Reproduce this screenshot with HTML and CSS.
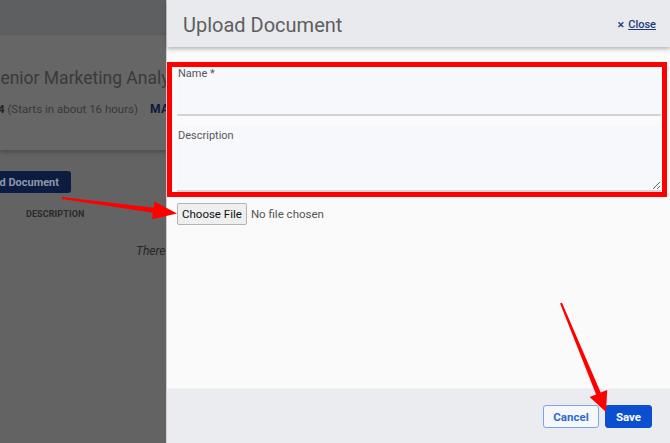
FILE: index.html
```html
<!DOCTYPE html>
<html>
<head>
<meta charset="utf-8">
<link rel="stylesheet" href="styles.css">
</head>
<body>
<div class="page">
  <div class="topbar"></div>
  <section class="card">
    <h2 class="job-title">Senior Marketing Analyst</h2>
    <div class="job-meta">
      <div class="meta-date"><span class="meta-text"><b>Sep 24</b> (Starts in about 16 hours)</span></div>
      <span class="meta-link">MANAGE</span>
    </div>
  </section>
  <div class="toolbar">
    <div class="tool-wrap"><button class="dark-btn">Upload Document</button></div>
  </div>
  <div class="table-head"><span class="th">DESCRIPTION</span></div>
  <div class="empty">There are no documents</div>
</div>

<aside class="drawer">
  <header class="drawer-head">
    <h1 class="drawer-title">Upload Document</h1>
    <a class="close"><span class="close-x">&#x2715;</span><span class="close-t">Close</span></a>
  </header>
  <div class="drawer-body">
    <form class="form">
      <div class="field">
        <label class="label">Name *</label>
        <input class="input" type="text">
      </div>
      <div class="field field-desc">
        <label class="label">Description</label>
        <textarea class="textarea"></textarea>
      </div>
      <div class="file-row">
        <button type="button" class="file-btn">Choose File</button>
        <span class="file-none">No file chosen</span>
      </div>
    </form>
  </div>
  <footer class="drawer-foot">
    <button class="btn btn-outline">Cancel</button>
    <button class="btn btn-primary">Save</button>
  </footer>
</aside>

<div class="annot-box"></div>
<svg class="annot" width="670" height="443" viewBox="0 0 670 443">
  <polygon fill="#ff0000" points="62.1,197 153.5,207.8 154.4,201.4 177,213.5 152,219.2 152.9,212.8 61.9,199"/>
  <polygon fill="#ff0000" points="561.9,302.6 600.7,392.5 607.2,389.9 606,412 589.6,397.1 596.1,394.5 560.1,303.4"/>
</svg>
</body>
</html>
```

FILE: styles.css
```css
* { box-sizing: border-box; }
html, body { margin: 0; padding: 0; }
body {
  width: 670px;
  height: 443px;
  overflow: hidden;
  position: relative;
  font-family: Roboto, "Liberation Sans", sans-serif;
  background: #636363;
}

/* dimmed background page */
.page { width: 670px; height: 443px; }
.topbar { height: 35px; background: #5e5f61; }
.card {
  height: 115px;
  background: #666666;
  box-shadow: 0 2px 4px rgba(0,0,0,0.25);
  padding-top: 32px;
}
.job-title {
  margin: 0 0 0 -10px;
  font-size: 17.5px;
  font-weight: 400;
  line-height: 22px;
  color: #3a3a3a;
  white-space: nowrap;
}
.job-meta {
  display: flex;
  align-items: center;
  gap: 12px;
  margin-top: 12px;
  height: 16px;
}
.meta-date {
  width: 138px;
  display: flex;
  justify-content: flex-end;
}
.meta-text {
  white-space: nowrap;
  font-size: 11.5px;
  color: #383838;
}
.meta-text b { color: #222; font-weight: 700; }
.meta-link {
  font-size: 12px;
  font-weight: 700;
  color: #0c1a3d;
  letter-spacing: 0.3px;
}
.toolbar { padding-top: 21px; }
.tool-wrap {
  width: 71px;
  display: flex;
  justify-content: flex-end;
}
.dark-btn {
  flex: none;
  height: 22px;
  padding: 0 12px;
  border: 0;
  border-radius: 3px;
  background: #0c1c40;
  color: #8e97a9;
  font-family: Roboto, sans-serif;
  font-size: 11px;
  font-weight: 700;
  white-space: nowrap;
}
.table-head { padding: 9px 0 0 26px; height: 21px; }
.th {
  font-size: 9px;
  font-weight: 700;
  color: #2a2a2a;
  letter-spacing: 0.1px;
}
.empty {
  margin: 30px 0 0 136px;
  font-size: 12px;
  font-style: italic;
  color: #262626;
  white-space: nowrap;
}

/* drawer */
.drawer {
  position: absolute;
  top: 0;
  left: 166px;
  width: 504px;
  height: 443px;
  display: flex;
  flex-direction: column;
  background: #fafafa;
  border-left: 1px solid #cfcfcf;
}
.drawer-head {
  height: 47px;
  flex: none;
  display: flex;
  align-items: center;
  justify-content: space-between;
  padding: 2px 14px 0 16px;
  background: #e9eaee;
  box-shadow: 0 2px 4px rgba(0,0,0,0.28);
  position: relative;
  z-index: 1;
}
.drawer-title {
  margin: 0;
  font-size: 20px;
  font-weight: 400;
  color: #5e5e5e;
}
.close {
  display: flex;
  align-items: center;
  gap: 3px;
  color: #1b3b78;
  font-size: 11px;
  font-weight: 500;
}
.close-x { font-size: 9px; font-weight: 700; }
.close-t { text-decoration: underline; }

.drawer-body {
  flex: 1;
  padding: 17px 9px 0 10px;
}
.form { display: flex; flex-direction: column; }
.field {
  background: #f7f8fc;
  padding-top: 3px;
  display: flex;
  flex-direction: column;
}
.field-desc { margin-top: 10px; }
.label {
  padding-left: 1px;
  font-size: 11px;
  line-height: 13px;
  color: #575757;
}
.input {
  height: 36px;
  border: 0;
  border-bottom: 2px solid #d4d4d6;
  background: #f7f8fc;
  outline: none;
}
.textarea {
  height: 50px;
  border: 0;
  border-bottom: 2px solid #d4d4d6;
  background: #f7f8fc;
  resize: vertical;
  outline: none;
  display: block;
}
.file-row {
  margin-top: 11px;
  display: flex;
  align-items: center;
  gap: 4px;
}
.file-btn {
  height: 22px;
  padding: 0 4px;
  border: 1px solid #b4b4b4;
  border-radius: 2px;
  background: #efefef;
  color: #111;
  font-family: Roboto, sans-serif;
  font-size: 11.5px;
}
.file-none {
  font-size: 11.5px;
  color: #555;
}

.drawer-foot {
  height: 55px;
  flex: none;
  display: flex;
  align-items: center;
  justify-content: flex-end;
  gap: 6px;
  padding: 1px 18px 0 0;
  background: #ebecf0;
  border-top: 1px solid #f2f3f5;
}
.btn {
  height: 23px;
  border-radius: 3px;
  font-family: Roboto, sans-serif;
  font-size: 11.5px;
  font-weight: 700;
  padding: 0;
}
.btn-outline {
  width: 56px;
  background: #f6f7fa;
  border: 1px solid #7ea5e3;
  color: #2e6acd;
}
.btn-primary {
  width: 47px;
  background: #0b4fd0;
  border: 1px solid #0b4fd0;
  color: #fff;
}

/* annotations */
.annot-box {
  position: absolute;
  left: 167px;
  top: 62px;
  width: 500px;
  height: 135px;
  border: 5px solid #ff0000;
  z-index: 5;
}
.annot {
  position: absolute;
  left: 0;
  top: 0;
  z-index: 6;
}
```
